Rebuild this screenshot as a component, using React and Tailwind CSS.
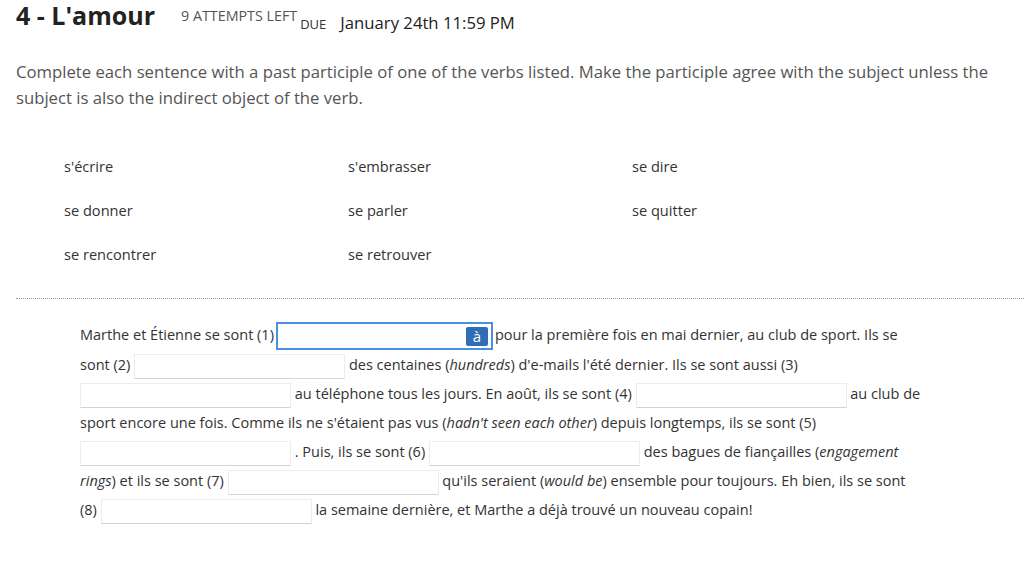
const verbs = [
  "s'écrire", "s'embrasser", 'se dire',
  'se donner', 'se parler', 'se quitter',
  'se rencontrer', 'se retrouver',
];

const Blank = ({ focused }) =>
  focused ? (
    <span className="mx-[2px] inline-flex h-[28px] w-[217px] items-center justify-end border-2 border-[#4a90e2] bg-white px-[3px] align-middle">
      <span className="flex h-[19px] w-[22px] items-center justify-center rounded-[2px] bg-[#2f6db5] text-[15px] leading-none text-white">à</span>
    </span>
  ) : (
    <span className="inline-block h-[25px] w-[211px] border border-[#ececec] border-b-[#d4d4d4] bg-white align-middle" />
  );

export default function App() {
  return (
    <div className="min-h-[571px] bg-white pl-4 text-[#333]" style={{ fontFamily: '"Open Sans", "Liberation Sans", sans-serif' }}>
      <div className="flex items-baseline">
        <h1 className="text-[25px] font-bold leading-[30px] text-[#222]">4 - L'amour</h1>
        <span className="relative top-[-4px] ml-[26px] text-[14.3px] text-[#555]">9 ATTEMPTS LEFT</span>
        <span className="relative top-[4px] ml-[3px] text-[13px] text-[#333]">DUE</span>
        <span className="relative top-[4px] ml-[14px] text-[16.7px] text-[#222]">January 24th 11:59 PM</span>
      </div>

      <p className="mt-[28px] pr-6 text-[16.7px] leading-[26px] text-[#555]">
        Complete each sentence with a past participle of one of the verbs listed. Make the participle agree with the subject unless the subject is also the indirect object of the verb.
      </p>

      <div className="mt-[45px] grid w-[900px] grid-cols-3 gap-y-[24px] pl-12 text-[14.6px] leading-[20px]">
        {verbs.map((v) => (
          <div key={v}>{v}</div>
        ))}
      </div>

      <div className="mt-[34px] border-t border-dotted border-[#999]" />

      <div className="mt-[21px] w-[907px] pl-16 text-[14.5px] leading-[29px]">
        Marthe et Étienne se sont (1)<Blank focused />pour la première fois en mai dernier, au club de sport. Ils se sont (2)
        {' '}<Blank />{' '}des centaines (<i>hundreds</i>) d'e-mails l'été dernier. Ils se sont aussi (3)
        {' '}<Blank />{' '}au téléphone tous les jours. En août, ils se sont (4)
        {' '}<Blank />{' '}au club de sport encore une fois. Comme ils ne s'étaient pas vus (<i>hadn't seen each other</i>) depuis longtemps, ils se sont (5)
        {' '}<Blank />{' '}. Puis, ils se sont (6)
        {' '}<Blank />{' '}des bagues de fiançailles (<i>engagement rings</i>) et ils se sont (7)
        {' '}<Blank />{' '}qu'ils seraient (<i>would be</i>) ensemble pour toujours. Eh bien, ils se sont (8)
        {' '}<Blank />{' '}la semaine dernière, et Marthe a déjà trouvé un nouveau copain!
      </div>
    </div>
  );
}
